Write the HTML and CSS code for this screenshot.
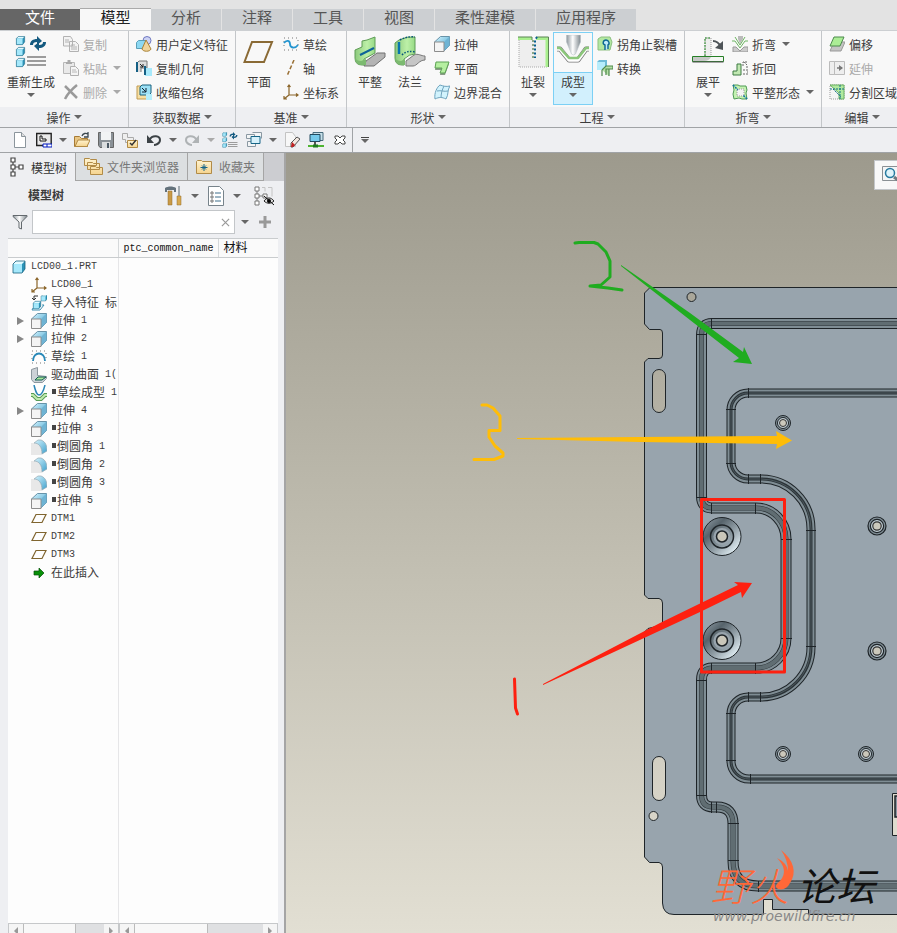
FILE: index.html
```html
<!DOCTYPE html>
<html lang="zh-CN">

<head>
    <meta charset="UTF-8">
    <meta name="viewport" content="width=device-width, initial-scale=1.0">
    <title>LCD00_1</title>
    <link rel="stylesheet" href="styles.css">
</head>

<body>
    <!-- Icon sprite -->
    <svg class="sprite" aria-hidden="true">
        <defs>
            <linearGradient id="steel" x1="0" x2="1"><stop offset="0" stop-color="#8d969c"/><stop offset=".45" stop-color="#fff"/><stop offset="1" stop-color="#7f888e"/></linearGradient>
            <linearGradient id="folder" x2="0" y2="1"><stop offset="0" stop-color="#fff3cf"/><stop offset="1" stop-color="#f5d48f"/></linearGradient>
            <linearGradient id="sky" x1="0" x2="1" y2="1"><stop offset="0" stop-color="#d9f6ff"/><stop offset="1" stop-color="#3d9fcb"/></linearGradient>
            <linearGradient id="leaf" x1="0" x2="1"><stop offset="0" stop-color="#8cc97c"/><stop offset=".6" stop-color="#bdf0a8"/><stop offset="1" stop-color="#97da85"/></linearGradient>
            <linearGradient id="dimple" x1="0" x2="1" y2="1"><stop offset="0" stop-color="#98a4ad"/><stop offset=".3" stop-color="#56636b"/><stop offset=".55" stop-color="#8d9aa2"/><stop offset=".85" stop-color="#dbe8ee"/><stop offset="1" stop-color="#98a4ad"/></linearGradient>
            <linearGradient id="dimple-in" x1="0" x2="1" y2="1"><stop offset="0" stop-color="#4f5b62"/><stop offset="1" stop-color="#a9b8c0"/></linearGradient>
        </defs>
        <symbol id="cube" viewBox="0 0 16 16"><path d="M2 5l3-3h9v8l-3 4H2z" fill="#2c93b7"/><path d="M2 5l3-3h9l-3 3z" fill="#e2faff"/><path d="M2 5h9v9H2z" fill="#a5e8fb"/><path d="M2 5l3-3h9v8l-3 4H2z" fill="none" stroke="#17617f" stroke-width=".8"/></symbol>
        <symbol id="regen" viewBox="0 0 32 32"><use href="#cube" x="0" y="-1" width="11" height="11"/><use href="#cube" x="0" y="10" width="11" height="11"/><use href="#cube" x="0" y="21" width="11" height="11"/><path d="M12 21h19M12 25h19M12 29h19" stroke="#9c9c9c" stroke-width="2"/><path d="M15 9c0-4 3-6 7-6V0l5 5-5 4V6c-3 0-4 1-4 3zM31 6c0 4-3 6-7 6v3l-5-5 5-4v3c3 0 4-1 4-3z" fill="#145a80"/></symbol>
        <symbol id="copy" viewBox="0 0 16 16"><path d="M.5.5h7l2 3V10h-9zM6.500 5.500h6l3 3v7h-9z" fill="#f3f3f3" stroke="#b2b2b2"/><path d="M2 4h4M2 6h4M8 9h4M8 11h6M8 13h6" stroke="#b2b2b2"/></symbol>
        <symbol id="paste" viewBox="0 0 16 16"><path d="M.5 2.500h11v11H.5z" fill="#e9e9e9" stroke="#b8b8b8"/><path d="M3 3h6M4.500 1h3" stroke="#aaa" stroke-width="2"/><path d="M7.500 6.500h5l3 3v6h-8z" fill="#f5f5f5" stroke="#b0b0b0"/><path d="M9 10h4M9 12h5" stroke="#b8b8b8"/></symbol>
        <symbol id="delete" viewBox="0 0 16 16"><path d="M2 2l12 12M14 1C9 5 5 9 2 15" stroke="#9a9a9a" stroke-width="2.500" fill="none"/></symbol>
        <symbol id="udf" viewBox="0 0 16 16"><circle cx="11" cy="4.500" r="4" fill="#cdd3f4" stroke="#7079c0"/><path d="M.5 6.500l2-2h7v6l-2 2h-7z" fill="#8cd8f2" stroke="#5a9fb8"/><path d="M10 4l5 9c-1 3-8 3-9 0z" fill="#f0d49a" stroke="#a98236"/></symbol>
        <symbol id="copygeom" viewBox="0 0 16 16"><path d="M1 12V3l2-2h8v7H5v4" fill="#ddd" stroke="#777"/><path d="M1 2v10" stroke="#155f84" stroke-width="2"/><path d="M4 4l3 3M7 4v3H4" stroke="#222" fill="none"/><path d="M9 8h7v8H9z" fill="#a8e9fb"/><path d="M9 6v9" stroke="#155f84" stroke-width="2"/></symbol>
        <symbol id="shrink" viewBox="0 0 16 16"><path d="M1 2h9v9h3v4H1z" fill="#f7dfa2" stroke="#c09a50"/><path d="M4 3l2-2h9v8l-2 2H4z" fill="#9ce0f5" stroke="#17617f"/><path d="M6 4l4 4M10 4v4H6" stroke="#123" fill="none"/><path d="M10 10h6v6h-6z" fill="#b5edfb"/></symbol>
        <symbol id="plane" viewBox="0 0 32 32"><path d="M9 6h20l-8 20H1.500z" fill="none" stroke="#8a6a35" stroke-width="2"/></symbol>
        <symbol id="sketch" viewBox="0 0 16 16"><path d="M1 2h14M1 14h14M1 5v8M15 4v8" stroke="#777" stroke-dasharray="1 3"/><path d="M1 7c2-3 6-3 6 1s5 5 8 1" fill="none" stroke="#2596d1" stroke-width="1.800"/></symbol>
        <symbol id="axis" viewBox="0 0 16 16"><path d="M11 0L4 16" stroke="#9a7036" stroke-width="1.500" stroke-dasharray="4 2"/></symbol>
        <symbol id="csys" viewBox="0 0 16 16"><path d="M6 1v10h9M6 11l-5 4M4.500 3L6 1l1.500 2M13 9.500l2 1.500-2 1.500M1 12v3h3" fill="none" stroke="#8a6428" stroke-width="1.200"/></symbol>
        <symbol id="flat" viewBox="0 0 32 32"><path d="M12 25l11-8h8v4l-11 9H10z" fill="#b4b4b4" stroke="#707070"/><path d="M1 14l7-3V5l5-1 8-3v16l-11 6v6H8q-7 0-7-7z" fill="url(#leaf)" stroke="#5f9c57"/><path d="M1 21q1 4 6 4l5-2v6H8q-7 0-7-8z" fill="#7cba70"/><path d="M6 19l14-7" stroke="#0d6398" stroke-width="2"/></symbol>
        <symbol id="flange" viewBox="0 0 32 32"><path d="M12 25l8-6c4-2 7 1 11 1v4c-6 0-8 6-12 6h-7z" fill="#c6c6c6" stroke="#777"/><path d="M1 7l4-3q8-4 16-3v17q-6 0-11 5v6H8q-7 0-7-7z" fill="url(#leaf)" stroke="#5f9c57"/><path d="M5 6v12" stroke="#0876ae" stroke-width="2.500"/><path d="M6 4q7-4 15-3M8 19q5-5 13-3" fill="none" stroke="#07547a" stroke-width="1.500" stroke-dasharray="1.500 1.500"/><path d="M1 21q1 4 6 4l4-2v6H8q-7 0-7-8z" fill="#7cba70"/></symbol>
        <symbol id="extrude" viewBox="0 0 16 16"><path d="M.5 6l6-5.500h9v9L10 15z" fill="url(#sky)" stroke="#6893a8"/><path d="M10 6l5.500-5.500v9L10 15z" fill="#6fb4d4"/><path d="M.5 6H10v9.500H.5z" fill="#f4f4f4" stroke="#8d8d8d"/></symbol>
        <symbol id="planar" viewBox="0 0 16 16"><path d="M2 4h13l-4 11H6l1-5H1z" fill="#8a9b88"/><path d="M2 2h13l-4 11H6l2-5H1z" fill="#b5efa0" stroke="#5da254"/></symbol>
        <symbol id="blend" viewBox="0 0 16 16"><path d="M1 15C0 9 3 3 6 1c3 1 6 2 10 1-3 4-1 8-4 13-4-2-7-2-11 0zM3 7c4-1 7 1 11 0M10 2c-2 4-3 8-3 12" fill="#d2f3fd" stroke="#6ea3bd"/></symbol>
        <symbol id="rip" viewBox="0 0 32 32"><path d="M2 4v27h28V4" fill="#eee" stroke="#aaa" stroke-dasharray="1 1"/><path d="M1 2.500h14M30 31V2.500H19" fill="none" stroke="#a9ef8e" stroke-width="3"/><path d="M1 1h14v3M31.500 31V1H19" fill="none" stroke="#5b8454"/><path d="M16 4v18" stroke="#8ba588" stroke-width="2" stroke-dasharray="2 2"/><path d="M20 1l-2 3v18" fill="none" stroke="#075f91" stroke-width="2" stroke-dasharray="2 2"/></symbol>
        <symbol id="form" viewBox="0 0 32 32"><path d="M9.500 0h14v7l-5 12q-2 2-4 0l-5-12z" fill="url(#steel)" stroke="#b6c0c6" stroke-width=".5"/><path d="M0 14h3l9 11h9l8-11h3" fill="none" stroke="#777" stroke-width="5" stroke-linejoin="round"/><path d="M0 14h3l9 11h9l8-11h3" fill="none" stroke="#fff" stroke-width="3.500" stroke-linejoin="round"/><path d="M0 13h3l9 10h9l8-10h3" fill="none" stroke="#8bc77a" stroke-width="2.500" stroke-linejoin="round"/></symbol>
        <symbol id="relief" viewBox="0 0 16 16"><path d="M1 3l3-2h9l2 5-2 8H1z" fill="#b3e8a1" stroke="#8dbf80"/><path d="M8 14V9c-3-1-2-5 1-5s4 4 2 5v4" fill="#bdeafa" stroke="#096592" stroke-width="1.400"/></symbol>
        <symbol id="convert" viewBox="0 0 16 16"><path d="M0 2l2-2h8v6l-2 4H0z" fill="#6fbbd7"/><path d="M0 2h8v8H0z" fill="#b6ecfb"/><path d="M5 10l4-4h7v3h-4v7M5 10v6M9 15V9h3" fill="#b5dfa6" stroke="#4f8a4c" stroke-width="1.200"/></symbol>
        <symbol id="unbend" viewBox="0 0 32 32"><path d="M13 20V2h6v18" fill="#eee" stroke="#999" stroke-dasharray="1 1"/><path d="M13 20V2h6" fill="none" stroke="#288d28" stroke-dasharray="2 1"/><path d="M.5 20.500h31v5H.5z" fill="#f4f7f3" stroke="#267f26"/><path d="M1 21h18q-2 4-7 4H1z" fill="#c6c8c6"/><path d="M.5 26h31" stroke="#555"/><path d="M21 5q5 0 8 6" fill="none" stroke="#4e5458" stroke-width="2"/><path d="M31 5v9l-8-2z" fill="#4e5458"/></symbol>
        <symbol id="bend" viewBox="0 0 16 16"><path d="M1 11h3l4 4 4-4h4v5H1z" fill="#ccc" stroke="#999"/><path d="M6 0h5v3L8 8 6 3z" fill="#bbb"/><path d="M0 5h3l5 7 5-7h3M3 1l5 8 5-8" fill="none" stroke="#6db562"/></symbol>
        <symbol id="bendback" viewBox="0 0 16 16"><path d="M1 11h4V4h4v11H1z" fill="#c1e8b2" stroke="#3c7a42"/><path d="M11 14h5v-4h-5M15 8V5l-3-3M11 6V2h4" stroke="#666" fill="none" stroke-dasharray="2 1"/></symbol>
        <symbol id="flatstate" viewBox="0 0 16 16"><path d="M1 1h5l2 1h6l1 4-1 3 1 6h-5l-3-1-5 1-1-5 1-4z" fill="#c4f2b2" stroke="#4f9a55"/><path d="M5 5h7v7H5z" fill="#f4f4f4" stroke="#999" stroke-dasharray="1 1"/><path d="M1 1l5 5M15 15l-4-4" stroke="#1275a4" stroke-width="1.500" stroke-dasharray="2 1"/></symbol>
        <symbol id="offset" viewBox="0 0 16 16"><path d="M5 6h11l-4 9H1z" fill="#c4c4c4" stroke="#999"/><path d="M5 1h10l-4 9H1z" fill="#abed96" stroke="#4c8a4d"/></symbol>
        <symbol id="extend" viewBox="0 0 16 16"><path d="M.5 1.500h5v13h-5zM5.500 1.500h10v13h-10z" fill="#eee" stroke="#bbb"/><path d="M8 8h5" stroke="#777" stroke-width="1.500"/><path d="M10 5l4 3-4 3z" fill="#777"/></symbol>
        <symbol id="split" viewBox="0 0 16 16"><path d="M1 1h14v14H1z" fill="#f4f5f4" stroke="#999" stroke-dasharray="1 1"/><path d="M1 1h14v14h-5V9L1 1z" fill="#b0ea9f" stroke="#6cb063"/><path d="M4 5l8 8M1 5h14M11 1v14" stroke="#137086" stroke-dasharray="2 1"/></symbol>
        <symbol id="new" viewBox="0 0 16 16"><path d="M2.500.5h7l4 4v11h-11z" fill="#fff" stroke="#8b959c"/><path d="M9.500.5v4h4" fill="#ddd" stroke="#8b959c"/></symbol>
        <symbol id="window" viewBox="0 0 16 16"><path d="M.7 1.500h14.500v12H.7z" fill="#e9e9e9" stroke="#222" stroke-width="1.400"/><path d="M4 4v5h6V7H6V4z" fill="#fff" stroke="#111"/><path d="M7 12h9v3H7zM11 12v3" fill="#fff" stroke="#0019c0"/></symbol>
        <symbol id="open" viewBox="0 0 16 16"><path d="M.5 14.500v-10h5l2 2h6v8z" fill="#e8c583" stroke="#a77b35"/><path d="M4 8h12l-3 6.500H1z" fill="url(#folder)" stroke="#b28a43"/><path d="M8 4c1-3 4-3 6-2M14 0v5h-4" fill="none" stroke="#3a474f" stroke-width="1.300"/></symbol>
        <symbol id="save" viewBox="0 0 16 16"><path d="M.5.500h15v15H2l-1.500-2z" fill="#8a9197" stroke="#666"/><path d="M3 0h10v8H3z" fill="#f1f3f4"/><path d="M4 10h8v6H4z" fill="#dadddf"/><path d="M9 11h2v5H9z" fill="#4b5965"/></symbol>
        <symbol id="saveas" viewBox="0 0 16 16"><path d="M.5 1.500h5v4h6v5h-8v-3h-3z" fill="#eee" stroke="#aaa"/><path d="M5.500 8.500h10v7h-10z" fill="url(#folder)" stroke="#b28a43"/><path d="M8 11l2 2 4-5" fill="none" stroke="#333" stroke-width="1.500"/></symbol>
        <symbol id="undo" viewBox="0 0 16 16"><path d="M3 8c4-6 11-4 11 0 0 4-5 5-6 5" fill="none" stroke="#3c4246" stroke-width="2"/><path d="M1 3v8h7z" fill="#3c4246"/></symbol>
        <symbol id="redo" viewBox="0 0 16 16"><path d="M13 8C9 2 2 4 2 8c0 4 5 5 6 5" fill="none" stroke="#afb3b5" stroke-width="2"/><path d="M15 3v8H8z" fill="#afb3b5"/></symbol>
        <symbol id="windows" viewBox="0 0 16 16"><path d="M.5 2.500h8v4h-8zM6.500.5h9v6M1.500 9.500h8v5h-8z" fill="#f3f5f6" stroke="#8a98a2"/><path d="M5 4.500h9v7H5z" fill="#d6f1fb" stroke="#166587"/></symbol>
        <symbol id="erase" viewBox="0 0 16 16"><path d="M1.500.5h7l3 4v10h-10z" fill="#f7f7f7" stroke="#c3c3c3"/><path d="M7 11l6-6 3 2-7 8H7z" fill="#f2e7df" stroke="#555"/><path d="M8 10l3 3-2 2H7z" fill="#c41e20"/></symbol>
        <symbol id="screen" viewBox="0 0 16 16"><path d="M5 .5h10v8H5z" fill="#c6dfe9" stroke="#45697b"/><path d="M2 2.500h10v7H2z" fill="#75c9ea" stroke="#22495e"/><path d="M7 10v3" stroke="#555" stroke-width="2"/><path d="M0 14h16" stroke="#4eb431" stroke-width="2"/><path d="M5 14h5" stroke="#1f7a1e" stroke-width="3"/></symbol>
        <symbol id="close" viewBox="0 0 16 16"><path d="M3 4h3l2 2 2-2h3v2l-2 2 2 2v2h-3l-2-2-2 2H3v-2l2-2-2-2z" fill="#fff" stroke="#444"/></symbol>
        <symbol id="treeicon" viewBox="0 0 20 20"><path d="M4 1h4v4H4zM4 8h4v4H4zM4 15h4v4H4zM12 8h4v4h-4zM6 5v3M6 12v3M8 10h4" fill="#fff" stroke="#444" stroke-width="1.200"/></symbol>
        <symbol id="folders" viewBox="0 0 20 20"><path d="M1.500 8.500v-7h5l1 1h6v6zM4.500 12.500v-7h5l1 1h6v6zM7.500 17.500v-8h5l1 1h6v7z" fill="url(#folder)" stroke="#b18b47"/></symbol>
        <symbol id="favorite" viewBox="0 0 16 16"><path d="M.5 14.500v-12l1-1h4l1 1h9v12z" fill="url(#folder)" stroke="#b18b47"/><path d="M8 5v7M4.500 8.500h7M6 6.500l4 4M10 6.500l-4 4" stroke="#156489"/></symbol>
        <symbol id="tools" viewBox="0 0 20 20"><path d="M1 2c3-2 8-2 11 0v4h-2V4H3v2H1z" fill="#64727c"/><path d="M4 5h4v14H4z" fill="#c99a47" stroke="#91692a" stroke-width=".5"/><path d="M14 0h2v10h-2z" fill="#a4acb2"/><path d="M13 10h4v9h-4z" fill="#d7a950" stroke="#91692a" stroke-width=".5"/></symbol>
        <symbol id="doc" viewBox="0 0 20 20"><path d="M2.500.5h11l4 4v15h-15z" fill="#fff" stroke="#77838b"/><path d="M9 7h6M9 11h6M9 15h6" stroke="#3e6f8c"/><path d="M5 6h2v2H5zM5 10h2v2H5zM5 14h2v2H5z" fill="#fff" stroke="#777"/></symbol>
        <symbol id="hide" viewBox="0 0 20 20"><path d="M1 1h4v4H1zM1 8h4v4H1zM1 15h4v4H1zM9 8h4v4H9zM3 5v3M3 12v3M5 10h4" fill="#fff" stroke="#777"/><path d="M8 1.500h3v4M14 1.500h4v9" fill="none" stroke="#c4c4c4"/><path d="M10 15c3-4 7-4 10 0-3 3-7 3-10 0z" fill="#ddd" stroke="#222"/><circle cx="15" cy="15" r="2"/><path d="M10 10l10 9" stroke="#111"/></symbol>
        <symbol id="funnel" viewBox="0 0 16 16"><path d="M1 1.500h14v1L9.500 8v7L7 14V8L1 2.500z" fill="url(#steel)" stroke="#63696e"/></symbol>
        <symbol id="import" viewBox="0 0 16 16"><use href="#cube" x="9" y="-1" width="8" height="8"/><use href="#cube" x="1" y="5" width="10" height="10"/><path d="M2 13l-1 2h8l4-5h-2" stroke="#3f8fb0" fill="none"/><path d="M7 1H3v4M1 3l2 2 2-2" fill="none" stroke="#333"/></symbol>
        <symbol id="curve" viewBox="0 0 16 16"><path d="M1 2h14M1 14h14M1 5v8M15 4v8" stroke="#777" stroke-dasharray="1 3"/><path d="M2 12C2 2 14 2 14 12" fill="none" stroke="#2888b8" stroke-width="1.800"/></symbol>
        <symbol id="drive" viewBox="0 0 16 16"><path d="M.5 2.500l6-2v8l9 1v2l-4 4H3l-2.500-3z" fill="#ccd2d7" stroke="#8c979e"/><path d="M7 10h8l-4 3H4z" fill="#a9e79b" stroke="#155e54"/></symbol>
        <symbol id="sketchform" viewBox="0 0 16 16"><path d="M3 0c2 8 3 10 5 10s4-2 6-10" fill="#fff" stroke="#2c86b7" stroke-width="1.500"/><path d="M0 10h2l4 4h4l4-4h2" fill="none" stroke="#579b56" stroke-width="4"/><path d="M0 10h2l4 4h4l4-4h2" fill="none" stroke="#c0eaae" stroke-width="2"/></symbol>
        <symbol id="round" viewBox="0 0 16 16"><path d="M0 4h5c4 1 6 5 6 12H0z" fill="#e8e8e8"/><path d="M3 4l4-3h3c5 2 6 6 6 11l-5 3C11 8 8 4 3 4z" fill="url(#sky)" stroke="#95a9b3" stroke-width=".7"/></symbol>
        <symbol id="datum" viewBox="0 0 16 16"><path d="M5 3.500h10l-4 8H1z" fill="none" stroke="#80652f" stroke-width="1.200"/></symbol>
        <symbol id="insert" viewBox="0 0 16 16"><path d="M3 6h5V3l5 5-5 5v-3H3z" fill="#089008" stroke="#064d08" stroke-width=".7"/></symbol>
        <symbol id="zoomfit" viewBox="0 0 20 20"><path d="M.5 1.500h19v14H.5z" fill="#f4f5f6" stroke="#8a9094"/><circle cx="8" cy="8" r="4.500" fill="#dff4fb" stroke="#287ba0" stroke-width="1.500"/><path d="M12 12l5 4" stroke="#707b82" stroke-width="3"/></symbol>
    </svg>

    <!-- Ribbon tabs -->
    <nav class="tabs">
        <button class="tab tab-file">文件</button>
        <button class="tab tab-active">模型</button>
        <button class="tab">分析</button>
        <button class="tab">注释</button>
        <button class="tab">工具</button>
        <button class="tab">视图</button>
        <button class="tab tab-wide">柔性建模</button>
        <button class="tab tab-wide">应用程序</button>
    </nav>

    <!-- Ribbon -->
    <section class="ribbon">
        <div class="group group-ops">
            <div class="group-body">
                <button class="big big-wide"><svg><use href="#regen"/></svg><span class="big-label">重新生成<i class="caret"></i></span></button>
                <div class="stack">
                    <button class="cmd" disabled><svg><use href="#copy"/></svg>复制</button>
                    <button class="cmd" disabled><svg><use href="#paste"/></svg>粘贴<i class="caret"></i></button>
                    <button class="cmd" disabled><svg><use href="#delete"/></svg>删除<i class="caret"></i></button>
                </div>
            </div>
            <button class="group-name">操作<i class="caret"></i></button>
        </div>
        <div class="group group-data">
            <div class="group-body">
                <div class="stack">
                    <button class="cmd"><svg><use href="#udf"/></svg>用户定义特征</button>
                    <button class="cmd"><svg><use href="#copygeom"/></svg>复制几何</button>
                    <button class="cmd"><svg><use href="#shrink"/></svg>收缩包络</button>
                </div>
            </div>
            <button class="group-name">获取数据<i class="caret"></i></button>
        </div>
        <div class="group group-datum">
            <div class="group-body">
                <button class="big"><svg><use href="#plane"/></svg><span class="big-label">平面</span></button>
                <div class="stack">
                    <button class="cmd"><svg><use href="#sketch"/></svg>草绘</button>
                    <button class="cmd"><svg><use href="#axis"/></svg>轴</button>
                    <button class="cmd"><svg><use href="#csys"/></svg>坐标系</button>
                </div>
            </div>
            <button class="group-name">基准<i class="caret"></i></button>
        </div>
        <div class="group group-shape">
            <div class="group-body">
                <button class="big"><svg><use href="#flat"/></svg><span class="big-label">平整</span></button>
                <button class="big"><svg><use href="#flange"/></svg><span class="big-label">法兰</span></button>
                <div class="stack">
                    <button class="cmd"><svg><use href="#extrude"/></svg>拉伸</button>
                    <button class="cmd"><svg><use href="#planar"/></svg>平面</button>
                    <button class="cmd"><svg><use href="#blend"/></svg>边界混合</button>
                </div>
            </div>
            <button class="group-name">形状<i class="caret"></i></button>
        </div>
        <div class="group group-eng">
            <div class="group-body">
                <button class="big"><svg><use href="#rip"/></svg><span class="big-label">扯裂<i class="caret"></i></span></button>
                <button class="big big-hot"><svg><use href="#form"/></svg><span class="big-label">成型<i class="caret"></i></span></button>
                <div class="stack">
                    <button class="cmd"><svg><use href="#relief"/></svg>拐角止裂槽</button>
                    <button class="cmd"><svg><use href="#convert"/></svg>转换</button>
                </div>
            </div>
            <button class="group-name">工程<i class="caret"></i></button>
        </div>
        <div class="group group-bend">
            <div class="group-body">
                <button class="big"><svg><use href="#unbend"/></svg><span class="big-label">展平<i class="caret"></i></span></button>
                <div class="stack">
                    <button class="cmd"><svg><use href="#bend"/></svg>折弯<i class="caret"></i></button>
                    <button class="cmd"><svg><use href="#bendback"/></svg>折回</button>
                    <button class="cmd"><svg><use href="#flatstate"/></svg>平整形态<i class="caret"></i></button>
                </div>
            </div>
            <button class="group-name">折弯<i class="caret"></i></button>
        </div>
        <div class="group group-edit">
            <div class="group-body">
                <div class="stack">
                    <button class="cmd"><svg><use href="#offset"/></svg>偏移</button>
                    <button class="cmd" disabled><svg><use href="#extend"/></svg>延伸</button>
                    <button class="cmd"><svg><use href="#split"/></svg>分割区域</button>
                </div>
            </div>
            <button class="group-name">编辑<i class="caret"></i></button>
        </div>
    </section>

    <!-- Quick access toolbar -->
    <div class="quick">
        <button class="tool" aria-label="新建"><svg><use href="#new"/></svg></button>
        <button class="tool" aria-label="窗口"><svg><use href="#window"/></svg></button>
        <button class="drop" aria-label="更多窗口"><i class="caret"></i></button>
        <button class="tool" aria-label="打开"><svg><use href="#open"/></svg></button>
        <button class="tool" aria-label="保存"><svg><use href="#save"/></svg></button>
        <button class="tool" aria-label="另存为"><svg><use href="#saveas"/></svg></button>
        <button class="tool" aria-label="撤消"><svg><use href="#undo"/></svg></button>
        <button class="drop" aria-label="撤消列表"><i class="caret"></i></button>
        <button class="tool" aria-label="重做"><svg><use href="#redo"/></svg></button>
        <button class="drop" aria-label="重做列表" disabled><i class="caret"></i></button>
        <button class="tool" aria-label="重新生成"><svg><use href="#regen"/></svg></button>
        <button class="tool" aria-label="切换窗口"><svg><use href="#windows"/></svg></button>
        <button class="drop" aria-label="窗口列表"><i class="caret"></i></button>
        <button class="tool" aria-label="拭除"><svg><use href="#erase"/></svg></button>
        <button class="tool" aria-label="显示"><svg><use href="#screen"/></svg></button>
        <button class="tool" aria-label="关闭"><svg><use href="#close"/></svg></button>
        <button class="customize" aria-label="自定义"><i class="caret"></i></button>
    </div>

    <main class="workspace">
        <aside class="sidebar">
            <nav class="side-tabs">
                <button class="side-tab side-tab-active"><svg><use href="#treeicon"/></svg>模型树</button>
                <button class="side-tab side-tab-folders"><svg><use href="#folders"/></svg>文件夹浏览器</button>
                <button class="side-tab side-tab-fav"><svg><use href="#favorite"/></svg>收藏夹</button>
            </nav>
            <div class="side-head">
                <h2>模型树</h2>
                <button class="head-tool" aria-label="设置"><svg><use href="#tools"/></svg></button>
                <button class="head-drop" aria-label="设置列表"><i class="caret"></i></button>
                <button class="head-tool" aria-label="显示"><svg><use href="#doc"/></svg></button>
                <button class="head-drop" aria-label="显示列表"><i class="caret"></i></button>
                <button class="head-tool head-hide" aria-label="隐藏"><svg><use href="#hide"/></svg></button>
            </div>
            <div class="search">
                <svg class="funnel"><use href="#funnel"/></svg>
                <div class="search-box">
                    <input type="text" aria-label="搜索模型树">
                    <button aria-label="清除"><svg viewBox="0 0 10 10"><path d="M1 1l8 8M9 1l-8 8" stroke="#999" stroke-width="1.300"/></svg></button>
                </div>
                <button class="search-btn" aria-label="搜索选项"><i class="caret"></i></button>
                <button class="search-btn" aria-label="添加"><svg viewBox="0 0 12 12"><path d="M6 0v12M0 6h12" stroke="#999" stroke-width="3"/></svg></button>
            </div>

            <div class="tree">
                <table>
                    <thead>
                        <tr><th class="col-name"></th><th class="col-common"><span class="mono">ptc_common_name</span></th><th>材料</th></tr>
                    </thead>
                    <tbody>
                        <tr><td><div class="node root"><svg><use href="#cube"/></svg><span class="mono">LCD00_1.PRT</span></div></td><td></td><td></td></tr>
                        <tr><td><div class="node"><svg><use href="#csys"/></svg><span class="mono">LCD00_1</span></div></td><td></td><td></td></tr>
                        <tr><td><div class="node"><svg><use href="#import"/></svg>导入特征<span class="mono"> </span>标</div></td><td></td><td></td></tr>
                        <tr><td><div class="node parent"><svg><use href="#extrude"/></svg>拉伸<span class="mono"> 1</span></div></td><td></td><td></td></tr>
                        <tr><td><div class="node parent"><svg><use href="#extrude"/></svg>拉伸<span class="mono"> 2</span></div></td><td></td><td></td></tr>
                        <tr><td><div class="node"><svg><use href="#curve"/></svg>草绘<span class="mono"> 1</span></div></td><td></td><td></td></tr>
                        <tr><td><div class="node"><svg><use href="#drive"/></svg>驱动曲面<span class="mono"> 1(</span></div></td><td></td><td></td></tr>
                        <tr><td><div class="node"><svg><use href="#sketchform"/></svg><i class="mark"></i>草绘成型<span class="mono"> 1</span></div></td><td></td><td></td></tr>
                        <tr><td><div class="node parent"><svg><use href="#extrude"/></svg>拉伸<span class="mono"> 4</span></div></td><td></td><td></td></tr>
                        <tr><td><div class="node"><svg><use href="#extrude"/></svg><i class="mark"></i>拉伸<span class="mono"> 3</span></div></td><td></td><td></td></tr>
                        <tr><td><div class="node"><svg><use href="#round"/></svg><i class="mark"></i>倒圆角<span class="mono"> 1</span></div></td><td></td><td></td></tr>
                        <tr><td><div class="node"><svg><use href="#round"/></svg><i class="mark"></i>倒圆角<span class="mono"> 2</span></div></td><td></td><td></td></tr>
                        <tr><td><div class="node"><svg><use href="#round"/></svg><i class="mark"></i>倒圆角<span class="mono"> 3</span></div></td><td></td><td></td></tr>
                        <tr><td><div class="node"><svg><use href="#extrude"/></svg><i class="mark"></i>拉伸<span class="mono"> 5</span></div></td><td></td><td></td></tr>
                        <tr><td><div class="node"><svg><use href="#datum"/></svg><span class="mono">DTM1</span></div></td><td></td><td></td></tr>
                        <tr><td><div class="node"><svg><use href="#datum"/></svg><span class="mono">DTM2</span></div></td><td></td><td></td></tr>
                        <tr><td><div class="node"><svg><use href="#datum"/></svg><span class="mono">DTM3</span></div></td><td></td><td></td></tr>
                        <tr><td><div class="node"><svg><use href="#insert"/></svg>在此插入</div></td><td></td><td></td></tr>
                        <tr class="rest"><td></td><td></td><td></td></tr>
                    </tbody>
                </table>
            </div>
            <div class="scrollbars">
                <div class="scroll"><button aria-label="向左"><i class="left"></i></button><span class="thumb"></span><button aria-label="向右"><i class="right"></i></button></div>
                <div class="scroll scroll-wide"><button aria-label="向左"><i class="left"></i></button><span class="thumb"></span><button aria-label="向右"><i class="right"></i></button></div>
            </div>
        </aside>

        <!-- Graphics area -->
        <section class="canvas">
            <svg class="model" viewBox="286 153 611 780" preserveAspectRatio="xMinYMin slice">
                <defs>
                    <path id="bead-outer" d="M900 323.500H712Q701.500 323.500 701.500 335V496Q701.500 508 712 508H756A30 31 0 0 1 786 539V638A30 30 0 0 1 756 668H712Q701.500 668 701.500 680V795Q701.500 807 713 807H717Q733 807 733 824V861Q733 886 758 886H900"/>
                    <path id="bead-inner" d="M900 393H748A17 17 0 0 0 731 410V462A17 17 0 0 0 748 479H761A50 50 0 0 1 811 529V647A50 50 0 0 1 761 697H748A17 17 0 0 0 731 714V761A18 18 0 0 0 749 779H900"/>
                    <g id="boss">
                        <circle r="7.500" fill="#7f8d95" stroke="#1e2428"/>
                        <circle r="5.500" fill="#c3d0d7" stroke="#1e2428"/>
                        <circle r="3.500" fill="#cbc8bb" stroke="#333"/>
                    </g>
                    <g id="dome">
                        <circle r="19" fill="url(#dimple)" stroke="#1e2428"/>
                        <circle r="11.500" fill="url(#dimple-in)" stroke="#1e2428" stroke-width="1.500"/>
                        <circle r="8.500" fill="#98a4ad"/>
                        <circle r="5.500" fill="#cac7ba" stroke="#1e2428" stroke-width="1.500"/>
                    </g>
                </defs>
                <!-- plate with slots and holes -->
                <path fill="#98a4ad" stroke="#1e2428" fill-rule="evenodd" d="M900 287.500H650L644.500 293V324L649.500 329.500H660Q662.500 329.500 662.500 333V355Q662.500 358.500 659 358.500H648L644.500 362V595L648 598.500H659Q662.500 599 662.500 603V625L648 628.500L644.500 632V857L649.500 862.500H659Q662.500 863 662.500 867V903Q663 914.500 674 914.500H763.500V899.500H772.500V909.500H808.500V914.500H900Z
                    M652.500 376a6.500 6.500 0 0 1 13 0V406a6.500 6.500 0 0 1-13 0Z
                    M652.500 763a6.500 6.500 0 0 1 13 0V794a6.500 6.500 0 0 1-13 0Z
                    M687 297a4.500 4.500 0 1 0 9 0a4.500 4.500 0 1 0-9 0Z
                    M649 816a4.500 4.500 0 1 0 9 0a4.500 4.500 0 1 0-9 0Z"/>
                <path d="M900 793.500H892.500V835.500H900" fill="#dedbce" stroke="#1e2428"/>
                <path d="M900 796H895V817H900" fill="#8996a0" stroke="#1e2428" stroke-width="1.500"/>
                <!-- stamped beads -->
                <g fill="none">
                    <use href="#bead-outer" stroke="#1e2428" stroke-width="11"/>
                    <use href="#bead-outer" stroke="#7f8d94" stroke-width="9"/>
                    <use href="#bead-outer" stroke="#2c3438" stroke-width="5"/>
                    <use href="#bead-outer" stroke="#606d72" stroke-width="4"/>
                    <use href="#bead-inner" stroke="#1e2428" stroke-width="9"/>
                    <use href="#bead-inner" stroke="#7f8d94" stroke-width="7"/>
                    <use href="#bead-inner" stroke="#2c3438" stroke-width="3"/>
                    <use href="#bead-inner" stroke="#4c585e" stroke-width="1"/>
                    <path stroke="#1e2428" d="M711.500 318v11M696 334.500h11M696 497.500h11M711.500 503v11M755.500 503v11M781 539.500h11M781 638.500h11M711.500 663v11M755.500 663v11M696 680.500h11M696 795.500h11M711.500 802v11M716.500 802v11M728 823.500h11M728 860.500h11M758.500 881v11M748.500 388v10M726 409.500h10M726 463.500h10M748.500 474v10M760.500 474v10M806 530.500h10M806 646.500h10M748.500 692v10M760.500 692v10M726 713.500h10M726 760.500h10M750.500 774v10"/>
                </g>
                <use href="#boss" x="783" y="423"/>
                <use href="#boss" x="783" y="754"/>
                <use href="#boss" x="866" y="754"/>
                <use href="#boss" transform="translate(877 526) scale(1.200)"/>
                <use href="#boss" transform="translate(877 651) scale(1.200)"/>
                <use href="#dome" x="722" y="536.500"/>
                <use href="#dome" x="722" y="640.500"/>
                <!-- forum logo -->
                <text class="logo logo-fire" x="711" y="901">野火</text>
                <text class="logo" x="797" y="901">论坛</text>
                <text class="logo-url" x="713" y="921">www.proewildfire.cn</text>
                <path d="M781 850C794 860 797 873 790 883Q786 891 778 889Q773 886 780 881C787 873 784 865 777 858Q787 863 788 871Q788 860 781 850Z" fill="#ff6838"/>
                <!-- hand-drawn notes -->
                <g fill="none" stroke-width="3" stroke-linecap="round" stroke-linejoin="round">
                    <path stroke="#20ac20" d="M575 243L579 242.500H594L598 244L606 252L610 261V277L601 285L590 286L608 288L622 290"/>
                    <path stroke="#ffbd08" d="M482 405H487L493 408L500 416V430.500H489V437L495 446L503 453V456L494 459.500H474"/>
                    <path stroke="#fe2010" d="M514.500 679L515.500 708L517.500 714"/>
                    <path stroke="#fe2010" d="M701.500 499.500H784.500V672H701.500Z"/>
                </g>
                <path fill="#20ac20" d="M621 265L690 313L743 352L744 347L752 364L733 362L739 358L690 320L621 266Z"/>
                <path fill="#ffbd08" d="M517 438L777 436L776 431L792 440.500L776 449L777 444L640 442L517 439Z"/>
                <path fill="#fe2010" d="M543 684L660 623L738 585L734 582L752 583L742 598L741 592L700 612L543 685Z"/>
            </svg>
            <button class="view-tool" aria-label="重新调整"><svg><use href="#zoomfit"/></svg></button>
        </section>
    </main>
</body>

</html>
```
FILE: styles.css
```css
* {
    box-sizing: border-box;
}

body {
    margin: 0;
    height: 100vh;
    display: flex;
    flex-direction: column;
    overflow: hidden;
    background: #e3e3e3;
    color: #3c3c3c;
    font-family: "Liberation Sans", "Noto Sans CJK SC", sans-serif;
    font-size: 12px;
}

button {
    margin: 0;
    padding: 0;
    border: 0;
    background: none;
    color: inherit;
    font: inherit;
    white-space: nowrap;
}

svg {
    display: block;
    flex-shrink: 0;
}

.sprite {
    position: absolute;
    width: 0;
    height: 0;
}

.caret {
    flex-shrink: 0;
    width: 0;
    border: 4px solid transparent;
    border-top-color: #666;
    border-bottom: 0;
}

:disabled .caret {
    border-top-color: #aaa;
}

/* Ribbon tabs */
.tabs {
    display: flex;
    flex-shrink: 0;
    height: 30px;
    padding-top: 9px;
}

.tab {
    width: 71px;
    padding-bottom: 3px;
    border-right: 1px solid #e3e3e3;
    background: #cccfd2;
    font-size: 15px;
    line-height: 18px;
    color: #555;
}

.tab-file {
    width: 80px;
    border: 0;
    background: #666;
    color: #fff;
}

.tab-active {
    margin-top: -1px;
    border: 0;
    border-top: 1px solid #aaa;
    background: #f8f8f8;
    color: #222;
}

.tab-wide {
    width: 101px;
}

/* Ribbon */
.ribbon {
    display: flex;
    flex-shrink: 0;
    height: 98px;
    border-top: 1px solid #cccfd2;
    border-bottom: 1px solid #a0a3a6;
    background: #f8f8f8;
}

.group {
    display: flex;
    flex-direction: column;
    flex-shrink: 0;
    border-right: 1px solid #c3c6c9;
}

.group-ops {
    width: 129px;
}

.group-data {
    width: 107px;
}

.group-datum {
    width: 111px;
}

.group-shape {
    width: 163px;
}

.group-eng {
    width: 175px;
}

.group-bend {
    width: 137px;
}

.group-edit {
    flex: 1;
    min-width: 80px;
    border: 0;
}

.group-body {
    display: flex;
    flex: 1;
    padding: 1px 0 0 3px;
}

.group-name {
    display: flex;
    align-items: center;
    justify-content: center;
    gap: 3px;
    height: 20px;
    background: #eeeff2;
}

.big {
    width: 40px;
    height: 73px;
    padding-top: 4px;
}

.big-wide {
    width: 56px;
}

.big svg {
    width: 32px;
    height: 32px;
    margin: 0 auto 5px;
}

.big-label {
    display: flex;
    flex-direction: column;
    align-items: center;
    height: 32px;
    line-height: 20px;
}

.big-hot {
    border: 1px solid #7cd0f5;
    padding-top: 2px;
}

.big-hot .big-label {
    border-top: 1px solid #7cd0f5;
    background: #d2f0fd;
}

.stack {
    margin-left: 4px;
}

.cmd {
    display: flex;
    align-items: center;
    gap: 4px;
    height: 24px;
}

.cmd:disabled {
    color: #aaa;
}

.cmd svg {
    width: 16px;
    height: 16px;
}

.cmd .caret {
    margin-left: 2px;
}

/* Quick access toolbar */
.quick {
    display: flex;
    flex-shrink: 0;
    height: 25px;
    padding-left: 8px;
    border-bottom: 1px solid #a0a3a6;
    background: #eeeff2;
}

.tool {
    width: 24px;
}

.tool svg {
    width: 16px;
    height: 16px;
    margin: auto;
}

.drop {
    display: flex;
    align-items: center;
    justify-content: center;
    width: 14px;
}

.customize {
    display: flex;
    flex-direction: column;
    align-items: center;
    justify-content: center;
    gap: 1px;
    width: 25px;
    border-left: 1px solid #a0a3a6;
}

.customize::before {
    content: "";
    width: 8px;
    height: 1px;
    background: #444;
}

/* Sidebar */
.workspace {
    display: flex;
    flex: 1;
    min-height: 0;
}

.sidebar {
    display: flex;
    flex-direction: column;
    flex-shrink: 0;
    width: 286px;
    border-right: 2px solid #a5a5a5;
    background: #eeeff2;
}

.side-tabs {
    display: flex;
    height: 28px;
    background: #cccdd1;
}

.side-tab {
    display: flex;
    align-items: center;
    border-right: 1px solid #a5a5a5;
    border-bottom: 1px solid #a5a5a5;
    background: #dcdfe1;
    color: #777;
}

.side-tab svg {
    width: 20px;
    height: 20px;
}

.side-tab-active {
    width: 76px;
    padding-left: 7px;
    gap: 4px;
    border-bottom: 0;
    background: #eeeff2;
    color: #333;
}

.side-tab-folders {
    width: 112px;
    padding-left: 7px;
    gap: 4px;
}

.side-tab-fav {
    width: 76px;
    padding-left: 8px;
    gap: 7px;
}

.side-tab-fav svg {
    width: 16px;
    height: 16px;
}

.side-head {
    display: flex;
    align-items: center;
    height: 29px;
    padding: 0 10px 0 28px;
}

.side-head h2 {
    flex: 1;
    margin: 0;
    font-size: 12px;
    line-height: 20px;
}

.head-tool svg {
    width: 20px;
    height: 20px;
}

.head-drop {
    display: flex;
    justify-content: center;
    width: 22px;
}

.head-hide {
    margin-left: 6px;
}

.search {
    display: flex;
    align-items: center;
    height: 24px;
    padding-left: 12px;
}

.funnel {
    width: 16px;
    height: 16px;
    margin-right: 4px;
}

.search-box {
    display: flex;
    align-items: center;
    width: 203px;
    height: 24px;
    border: 1px solid #c3c6c9;
    background: #fff;
}

.search-box input {
    flex: 1;
    min-width: 0;
    border: 0;
    outline: 0;
    background: none;
    font: inherit;
}

.search-box button {
    width: 18px;
}

.search-box svg {
    width: 9px;
    height: 9px;
    margin: auto;
}

.search-btn {
    display: flex;
    justify-content: center;
    width: 20px;
}

.search-btn svg {
    width: 12px;
    height: 12px;
}

/* Model tree */
.tree {
    flex: 1;
    min-height: 0;
    margin: 4px 6px 0 8px;
    border-top: 1px solid #c9ccce;
    background: #fdfdfd;
}

.tree table {
    width: 100%;
    height: 100%;
    table-layout: fixed;
    border-collapse: collapse;
}

.tree th {
    height: 18px;
    padding: 0 0 0 5px;
    border-right: 1px solid #d5d8da;
    border-bottom: 1px solid #c9ccce;
    background: #fafafa;
    color: #111;
    font-weight: normal;
    line-height: 17px;
    text-align: left;
    overflow: hidden;
}

.tree th.col-name {
    width: 110px;
}

.tree th.col-common {
    width: 100px;
}

.tree th:last-child {
    border-right: 0;
}

.tree td {
    height: 18px;
    padding: 0;
    overflow: hidden;
}

.tree td:first-child {
    border-right: 1px solid #e6e6e8;
}

.tree .rest td {
    height: auto;
}

.node {
    display: flex;
    align-items: center;
    height: 18px;
    padding-left: 23px;
    line-height: 18px;
    white-space: pre;
    overflow: hidden;
}

.node svg {
    width: 16px;
    height: 16px;
    margin-right: 4px;
}

.root {
    padding-left: 3px;
}

.parent {
    padding-left: 9px;
}

.parent::before {
    content: "";
    margin-right: 7px;
    border: 4px solid transparent;
    border-left: 7px solid #888;
    border-right: 0;
}

.mark {
    width: 4px;
    height: 5px;
    margin: 0 1px 4px;
    background: #444;
}

.mono {
    font-family: "Liberation Mono", monospace;
    font-size: 10px;
}

.scrollbars {
    display: flex;
    height: 10px;
    margin: 0 6px 0 8px;
    overflow: hidden;
}

.scroll {
    display: flex;
    width: 111px;
    height: 16px;
    border: 1px solid #c6c8ca;
    background: #dfe0e2;
}

.scroll-wide {
    flex: 1;
}

.scroll button {
    display: flex;
    align-items: center;
    justify-content: center;
    width: 14px;
    background: #f5f5f5;
}

.scroll button:last-child {
    margin-left: auto;
}

.thumb {
    width: 53px;
    border: 1px solid #bbb;
    border-width: 0 1px;
    background: #f8f8f8;
}

.scroll-wide .thumb {
    width: 74px;
}

.left,
.right {
    border: 4px solid transparent;
}

.left {
    border-right-color: #999;
    border-left: 0;
}

.right {
    border-left-color: #999;
    border-right: 0;
}

/* Graphics area */
.canvas {
    position: relative;
    flex: 1;
    min-width: 0;
    overflow: hidden;
    background: linear-gradient(#9d9a8d, #c3c0b3 55%, #e2dfd3);
}

.model {
    width: 100%;
    height: 100%;
}

.logo {
    font-family: "Noto Sans CJK SC", sans-serif;
    font-size: 39px;
    font-style: italic;
    font-weight: 400;
    fill: #111;
}

.logo-fire {
    font-weight: 300;
    fill: #ff6838;
}

.logo-url {
    font-family: "DejaVu Sans", sans-serif;
    font-size: 14px;
    font-style: italic;
    fill: #888;
}

.view-tool {
    position: absolute;
    top: 7px;
    right: 0;
    width: 23px;
    height: 30px;
    padding-left: 7px;
    border: 1px solid #c3c6c9;
    border-right: 0;
    background: #f8f8f8;
    overflow: hidden;
}

.view-tool svg {
    width: 20px;
    height: 20px;
}
```
